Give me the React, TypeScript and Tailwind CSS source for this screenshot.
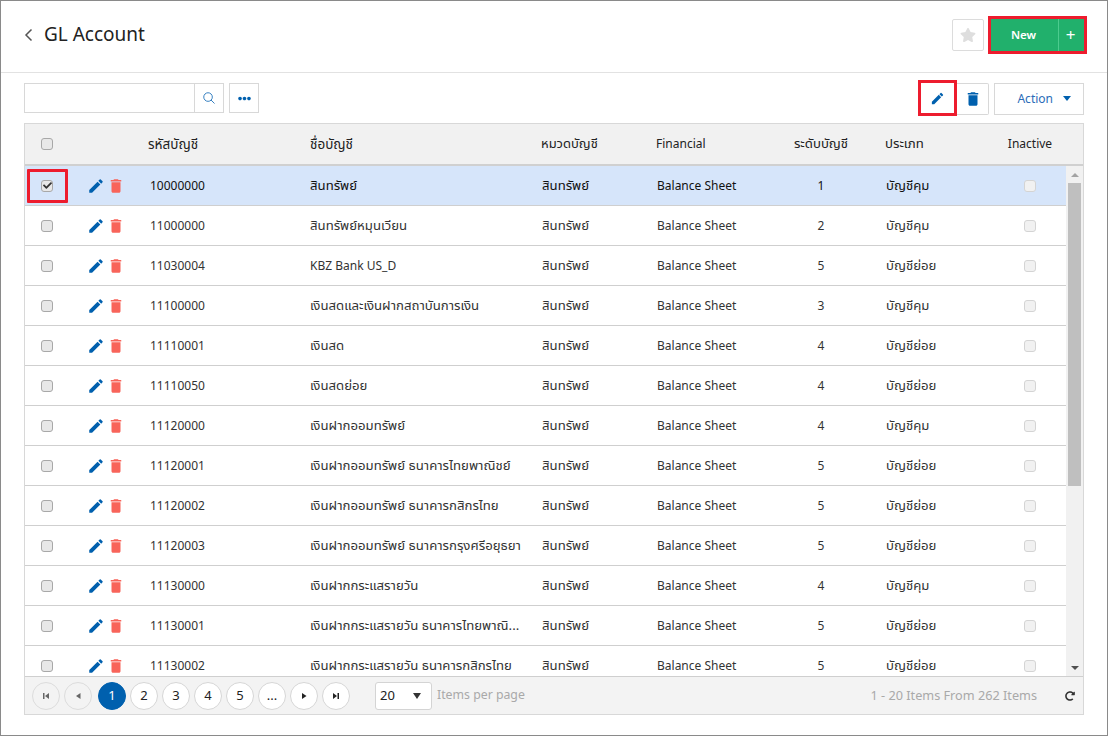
import React from "react";
import { MdEdit, MdDelete } from "react-icons/md";
import { FaStar, FaEllipsisH, FaCheck, FaRedoAlt } from "react-icons/fa";
import { IoSearchOutline } from "react-icons/io5";

const rows: [string, string, string, string][] = [
  ["10000000", "สินทรัพย์", "1", "บัญชีคุม"],
  ["11000000", "สินทรัพย์หมุนเวียน", "2", "บัญชีคุม"],
  ["11030004", "KBZ Bank US_D", "5", "บัญชีย่อย"],
  ["11100000", "เงินสดและเงินฝากสถาบันการเงิน", "3", "บัญชีคุม"],
  ["11110001", "เงินสด", "4", "บัญชีย่อย"],
  ["11110050", "เงินสดย่อย", "4", "บัญชีย่อย"],
  ["11120000", "เงินฝากออมทรัพย์", "4", "บัญชีคุม"],
  ["11120001", "เงินฝากออมทรัพย์ ธนาคารไทยพาณิชย์", "5", "บัญชีย่อย"],
  ["11120002", "เงินฝากออมทรัพย์ ธนาคารกสิกรไทย", "5", "บัญชีย่อย"],
  ["11120003", "เงินฝากออมทรัพย์ ธนาคารกรุงศรีอยุธยา", "5", "บัญชีย่อย"],
  ["11130000", "เงินฝากกระแสรายวัน", "4", "บัญชีคุม"],
  ["11130001", "เงินฝากกระแสรายวัน ธนาคารไทยพาณิ...", "5", "บัญชีย่อย"],
  ["11130002", "เงินฝากกระแสรายวัน ธนาคารกสิกรไทย", "5", "บัญชีย่อย"],
];

const cols = "grid grid-cols-[44px_81px_160px_232px_115px_119px_90px_128px_72px] items-center";

function Box({ checked, faint }: { checked?: boolean; faint?: boolean }) {
  return (
    <span
      className={
        "flex h-3 w-3 items-center justify-center rounded-[3px] border " +
        (faint ? "border-[#d4d4d4] bg-[#f1f1f1]" : "border-[#a8a8a8] bg-[#e8e8e8]")
      }
    >
      {checked && <FaCheck className="text-[9px] text-[#333]" />}
    </span>
  );
}

function PageBtn({ children, active, dim }: { children: React.ReactNode; active?: boolean; dim?: boolean }) {
  return (
    <span
      className={
        "flex h-7 w-7 items-center justify-center rounded-full border text-[13px] " +
        (active
          ? "ml-[2px] border-[#0060ae] bg-[#0060ae] text-white"
          : dim
            ? "border-[#dcdcdc] bg-[#f3f3f3] text-[#666]"
            : "border-[#d6d6d6] bg-white text-[#222]")
      }
    >
      {children}
    </span>
  );
}

const Tri = ({ d }: { d: string }) => (
  <svg width="10" height="10" viewBox="0 0 10 10" fill="currentColor"><path d={d} /></svg>
);

export default function App() {
  return (
    <div
      className="flex h-[736px] w-[1108px] flex-col overflow-hidden border border-[#8a8a8a] bg-white text-[12px] text-[#333]"
      style={{ fontFamily: '"Noto Sans", "Noto Sans Thai", Tahoma, sans-serif' }}
    >
      <header className="flex h-[72px] shrink-0 items-center justify-between border-b border-[#e2e2e2] pb-1 pl-[23px] pr-[20px]">
        <div className="flex items-center gap-[11px]">
          <svg width="9" height="14" viewBox="0 0 9 14" fill="none" stroke="#555" strokeWidth="1.5"><path d="M7.5 1.5 2 7l5.5 5.5" /></svg>
          <h1 className="text-[19px] font-normal leading-none text-[#222]">GL Account</h1>
        </div>
        <div className="flex items-center gap-1">
          <span className="flex h-8 w-8 items-center justify-center rounded-[2px] border border-[#dcdcdc] bg-white">
            <FaStar className="text-[16px] text-[#dedede]" />
          </span>
          <div className="flex h-[38px] w-[99px] border-[3px] border-[#ed1c2e] bg-[#21b06c] text-white">
            <span className="flex flex-1 items-center justify-center pr-[2px] text-[11.5px] font-semibold">New</span>
            <span className="flex w-[26px] items-center justify-center border-l border-[#4ccb8e] pr-[2px] text-[17px] font-normal leading-none">+</span>
          </div>
        </div>
      </header>

      <div className="flex h-[50px] shrink-0 items-center justify-between pl-[23px] pr-[23px]">
        <div className="flex items-center gap-[5px]">
          <div className="flex h-[30px] w-[200px] border border-[#d8d8d8]">
            <span className="flex-1" />
            <span className="flex w-[29px] items-center justify-center border-l border-[#d8d8d8] text-[#1c6fb8]">
              <IoSearchOutline className="text-[14px]" />
            </span>
          </div>
          <span className="flex h-[30px] w-[30px] items-center justify-center border border-[#d8d8d8] text-[#0060ae]">
            <FaEllipsisH className="text-[13px]" />
          </span>
        </div>
        <div className="flex items-center gap-[5px]">
          <div className="flex items-center">
            <span className="z-10 flex h-[36px] w-[39px] items-center justify-center border-[3px] border-[#ed1c2e] bg-white text-[#0060ae]">
              <MdEdit className="text-[15px]" />
            </span>
            <span className="mt-px flex h-8 w-8 items-center justify-center rounded-r-[2px] border border-l-0 border-[#d8d8d8] text-[#0060ae]">
              <MdDelete className="text-[18px]" />
            </span>
          </div>
          <span className="mt-px flex h-8 w-[90px] items-center justify-end gap-[10px] border border-[#d8d8d8] pr-[12px] text-[#2b6cb8]">
            Action
            <svg width="8" height="5" viewBox="0 0 8 5" fill="#0060ae"><path d="M0 0h8L4 5z" /></svg>
          </span>
        </div>
      </div>

      <section className="mx-[23px] flex h-[592px] flex-col border border-[#d8d8d8]">
        <div className={cols + " h-[42px] shrink-0 border-b-2 border-[#d0d0d0] bg-[#f1f1f1] text-[#222]"}>
          <span className="flex justify-center"><Box /></span>
          <span />
          <span className="-ml-[2px] text-[13.5px]">รหัสบัญชี</span>
          <span className="text-[13.5px]">ชื่อบัญชี</span>
          <span className="-ml-px text-[13px]">หมวดบัญชี</span>
          <span className="-ml-px">Financial</span>
          <span className="text-center text-[13.2px]">ระดับบัญชี</span>
          <span className="pl-[19px] text-[13.2px]">ประเภท</span>
          <span className="text-center">Inactive</span>
        </div>
        <div className="flex min-h-0 flex-1">
          <div className="min-w-0 flex-1 overflow-hidden">
            {rows.map((r, i) => (
              <div key={r[0]} className={cols + " h-10 border-b border-[#cfcfcf] " + (i === 0 ? "bg-[#d6e5fa] text-[#111]" : "bg-white")}>
                <span className="relative flex justify-center">
                  <Box checked={i === 0} />
                  {i === 0 && <span className="absolute -top-[11px] left-[2px] h-[34px] w-[41px] rounded-[1px] border-[3px] border-[#ed1c2e]" />}
                </span>
                <span className="flex items-center gap-[2px] pl-[18px]">
                  <MdEdit className="text-[18px] text-[#0060ae]" />
                  <MdDelete className="text-[18px] text-[#f8645a]" />
                </span>
                <span>{r[0]}</span>
                <span className={"truncate pr-1 " + (r[1].startsWith("KBZ") ? "" : "text-[13.2px]")}>{r[1]}</span>
                <span className="text-[13.2px]">สินทรัพย์</span>
                <span>Balance Sheet</span>
                <span className="text-center">{r[2]}</span>
                <span className="pl-5 text-[13.2px]">{r[3]}</span>
                <span className="flex justify-center"><Box faint /></span>
              </div>
            ))}
          </div>
          <div className="flex w-[17px] shrink-0 flex-col bg-[#f1f1f1]">
            <span className="flex h-[17px] items-center justify-center text-[#a3a3a3]"><Tri d="M5 3l4 4H1z" /></span>
            <span className="mx-[2px] h-[303px] bg-[#bfbfbf]" />
            <span className="flex-1" />
            <span className="flex h-[17px] items-center justify-center text-[#505050]"><Tri d="M1 3h8L5 7z" /></span>
          </div>
        </div>
        <footer className="flex h-[38px] shrink-0 items-center border-t border-[#cfcfcf] bg-[#f3f3f3] pl-[7px] pr-[6px]">
          <div className="flex items-center gap-1">
            <PageBtn dim><Tri d="M2 2h1.5v6H2zM8 2v6L4 5z" /></PageBtn>
            <PageBtn dim><Tri d="M7.5 2v6L3 5z" /></PageBtn>
            <PageBtn active>1</PageBtn>
            <PageBtn>2</PageBtn>
            <PageBtn>3</PageBtn>
            <PageBtn>4</PageBtn>
            <PageBtn>5</PageBtn>
            <PageBtn>...</PageBtn>
            <PageBtn><Tri d="M3 2v6l4.5-3z" /></PageBtn>
            <PageBtn><Tri d="M2 2v6l4-3zM6.5 2H8v6H6.5z" /></PageBtn>
          </div>
          <span className="ml-[25px] flex h-7 w-[57px] items-center justify-between rounded-[3px] border border-[#d4d4d4] bg-white pl-[4px] pr-[10px] text-[13px] text-[#222]">
            20
            <svg width="8" height="6" viewBox="0 0 8 6" fill="#333"><path d="M0 0h8L4 6z" /></svg>
          </span>
          <span className="ml-[5px] text-[12.3px] text-[#a9a9a9]">Items per page</span>
          <span className="ml-auto text-[12.7px] text-[#a9a9a9]">1 - 20 Items From 262 Items</span>
          <FaRedoAlt className="ml-[28px] mr-[2px] text-[10px] text-[#333]" />
        </footer>
      </section>
    </div>
  );
}
